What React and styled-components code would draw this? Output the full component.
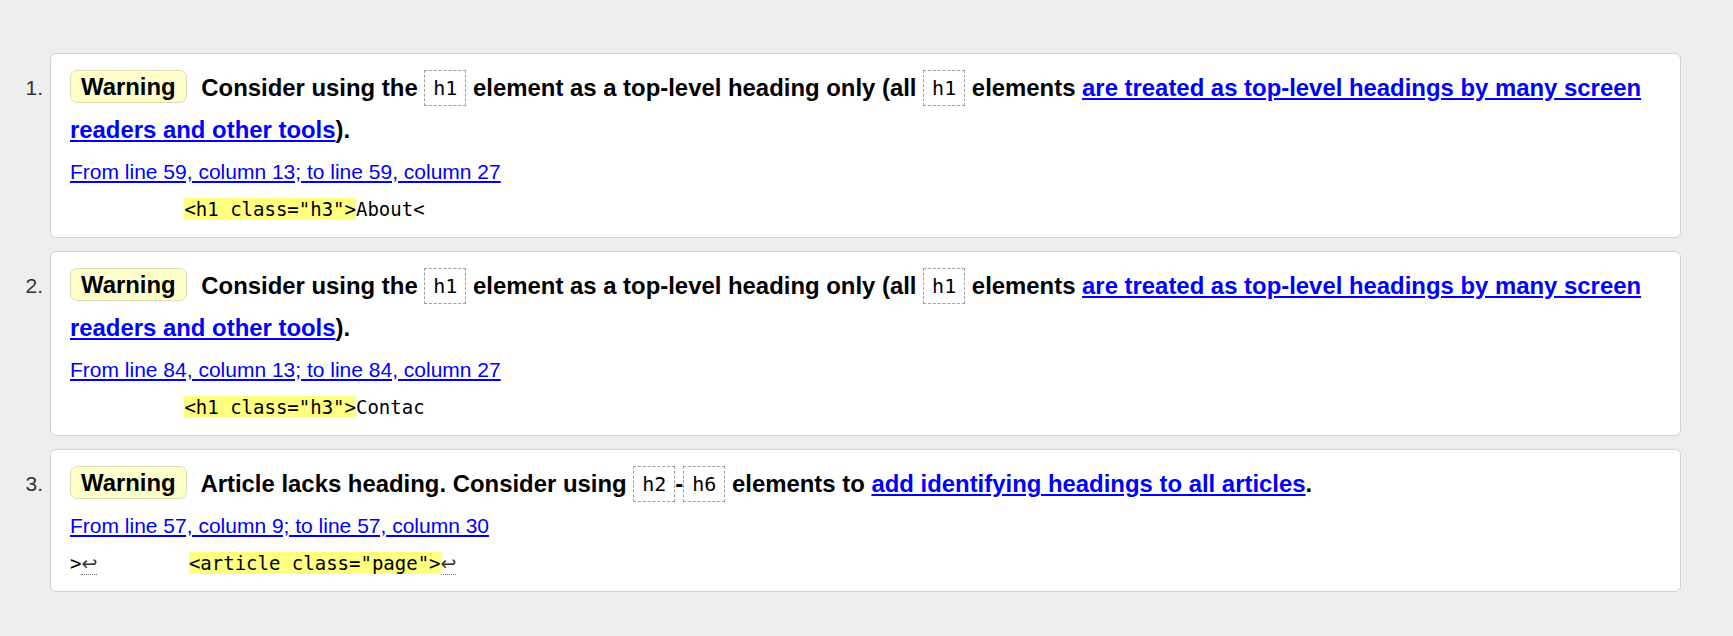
import React from 'react';
import styled, { createGlobalStyle } from 'styled-components';

const GlobalStyle = createGlobalStyle`
  html, body {
    margin: 0;
    padding: 0;
    background: #eee;
  }
  body {
    font-family: "Liberation Sans", Arial, sans-serif;
    font-size: 21px;
    color: #000;
  }
`;

const Page = styled.main`
  padding: 53px 52px 20px 0;
`;

const List = styled.ol`
  list-style: none;
  margin: 0;
  padding: 0;
  display: flex;
  flex-direction: column;
  gap: 13px;
`;

const Item = styled.li`
  display: grid;
  grid-template-columns: 50px 1fr;
`;

const Number = styled.span`
  padding: 14px 7px 0 0;
  text-align: right;
  line-height: 42px;
  font-size: 21px;
  color: #333;
`;

const Card = styled.div`
  background: #fff;
  border: 1px solid #d2d2d2;
  border-radius: 6px;
  padding: 13px 19px 16px;
`;

const Message = styled.p`
  margin: 0;
  font-size: 23.9px;
  font-weight: bold;
  line-height: 42px;
`;

const Badge = styled.strong`
  display: inline-block;
  padding: 0 10px;
  margin-right: 8px;
  line-height: 31px;
  background: #ffffcc;
  border: 1px solid #ddddb4;
  border-radius: 7px;
  vertical-align: 1px;
`;

const Tag = styled.code`
  display: inline-block;
  padding: 6px 8px;
  border: 1px dashed #a0a0a0;
  font-family: "DejaVu Sans Mono", "Liberation Mono", monospace;
  font-size: 20px;
  font-weight: normal;
  line-height: 22px;
  vertical-align: 1px;
`;

const Link = styled.a`
  color: #00f;
  text-decoration: underline;
`;

const Location = styled.p`
  margin: 8px 0 0;
  line-height: 26px;
  font-size: 21px;
`;

const Extract = styled.pre`
  margin: 12px 0 0;
  font-family: "DejaVu Sans Mono", "Liberation Mono", monospace;
  font-size: 19px;
  line-height: 24px;
  white-space: pre;
`;

const Mark = styled.b`
  font-weight: normal;
  background: #ffff80;
`;

const LineBreak = styled.span`
  font-family: "DejaVu Sans", sans-serif;
  font-size: 19px;
  color: #333;
  border-bottom: 1px dotted #777;
`;

const messages = [
  {
    text: (
      <>
        Consider using the <Tag>h1</Tag> element as a top-level heading only (all <Tag>h1</Tag> elements{' '}
        <Link href="#">are treated as top-level headings by many screen readers and other tools</Link>).
      </>
    ),
    location: 'From line 59, column 13; to line 59, column 27',
    extract: (
      <>
        {'          '}
        <Mark>{'<h1 class="h3">'}</Mark>
        {'About<'}
      </>
    ),
  },
  {
    text: (
      <>
        Consider using the <Tag>h1</Tag> element as a top-level heading only (all <Tag>h1</Tag> elements{' '}
        <Link href="#">are treated as top-level headings by many screen readers and other tools</Link>).
      </>
    ),
    location: 'From line 84, column 13; to line 84, column 27',
    extract: (
      <>
        {'          '}
        <Mark>{'<h1 class="h3">'}</Mark>
        {'Contac'}
      </>
    ),
  },
  {
    text: (
      <>
        Article lacks heading. Consider using <Tag>h2</Tag>-<Tag>h6</Tag> elements to{' '}
        <Link href="#">add identifying headings to all articles</Link>.
      </>
    ),
    location: 'From line 57, column 9; to line 57, column 30',
    extract: (
      <>
        {'>'}
        <LineBreak>↩</LineBreak>
        {'        '}
        <Mark>{'<article class="page">'}</Mark>
        <LineBreak>↩</LineBreak>
      </>
    ),
  },
];

const App = () => (
  <>
    <GlobalStyle />
    <Page>
      <List>
        {messages.map((m, i) => (
          <Item key={i}>
            <Number>{i + 1}.</Number>
            <Card>
              <Message>
                <Badge>Warning</Badge> {m.text}
              </Message>
              <Location>
                <Link href="#">{m.location}</Link>
              </Location>
              <Extract>{m.extract}</Extract>
            </Card>
          </Item>
        ))}
      </List>
    </Page>
  </>
);

export default App;
